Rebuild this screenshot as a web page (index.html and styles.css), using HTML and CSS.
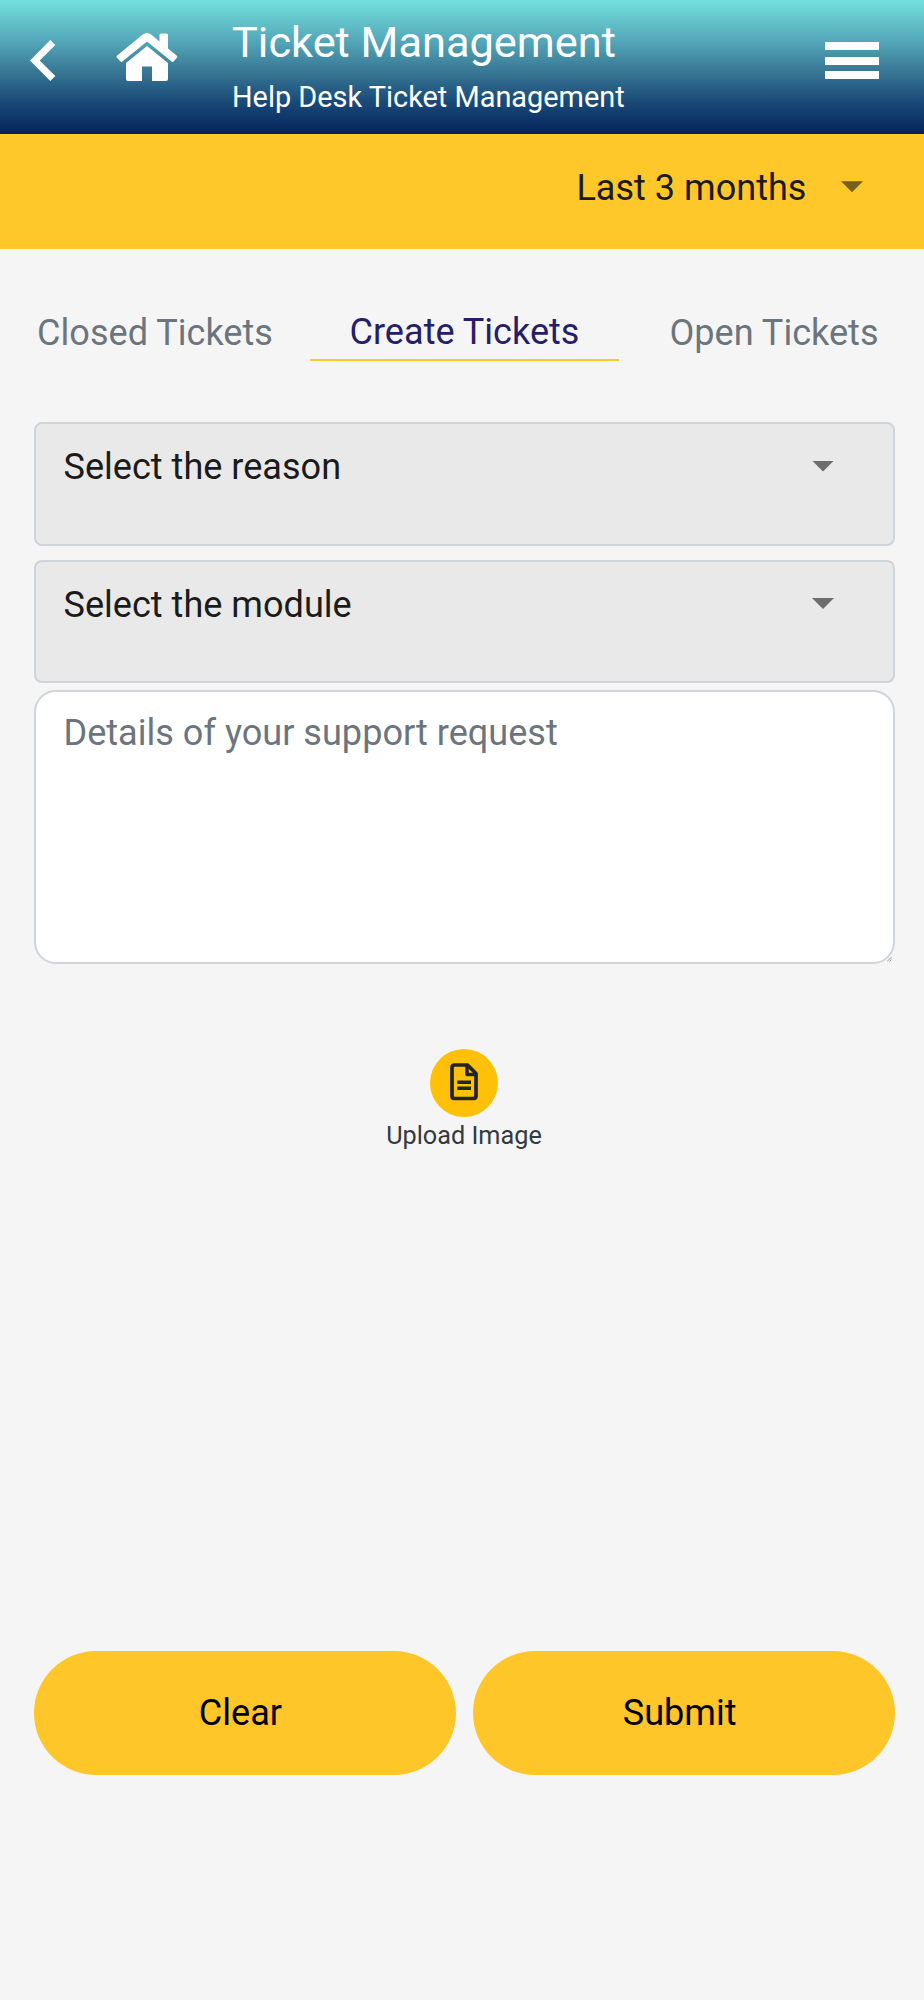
FILE: index.html
```html
<!DOCTYPE html>
<html lang="en">
<head>
<meta charset="utf-8">
<title>Ticket Management</title>
<link rel="stylesheet" href="styles.css">
</head>
<body>
<header class="header">
  <svg class="back" viewBox="0 0 26 42"><path d="M20.3 0 25.3 5 9.7 20.5 25.3 36 20.3 41 0 20.5Z"/></svg>
  <svg class="home" viewBox="0 0 62 48"><path d="M31 13 52 30V46Q52 48 50 48H36V33.5H26V48H12Q10 48 10 46V30Z"/><path d="M26.5 1.7Q31 -1.7 35.5 1.7L43.5 8.4V2Q43.5 .5 45 .5H50.5Q52 .5 52 2V15.5L60.6 22.6Q61.8 23.6 60.8 24.8L57.8 28.3Q56.8 29.4 55.6 28.4L31 8.5 6.4 28.4Q5.2 29.4 4.2 28.3L1 24.8Q0 23.6 1.2 22.6Z"/></svg>
  <div class="heading">
    <h1 class="title">Ticket Management</h1>
    <p class="subtitle">Help Desk Ticket Management</p>
  </div>
  <div class="menu"><span class="bar"></span><span class="bar"></span><span class="bar"></span></div>
</header>
<div class="filter"><span>Last 3 months</span><i class="caret"></i></div>
<nav class="tabs">
  <a class="tab">Closed Tickets</a>
  <a class="tab tab-active">Create Tickets</a>
  <a class="tab tab-last">Open Tickets</a>
</nav>
<main class="form">
  <div class="select"><span>Select the reason</span><i class="caret"></i></div>
  <div class="select"><span>Select the module</span><i class="caret"></i></div>
  <div class="details">Details of your support request
    <svg class="grip" viewBox="0 0 6 6"><path d="M0 5.5 5.5 0M3 5.5 5.5 3"/></svg>
  </div>
  <div class="upload">
    <div class="circle">
      <svg class="doc" viewBox="0 0 28 38"><path class="page" d="M5 2H17.5L26 10.5V33Q26 35.5 23.5 35.5H4.5Q2 35.5 2 33V4.5Q2 2 4.5 2Z"/><path class="line" d="M17 2V11.5H26M7.3 19.3H21M7.3 25.3H21"/></svg>
    </div>
    <span class="upload-label">Upload Image</span>
  </div>
  <div class="actions"><button class="button">Clear</button><button class="button">Submit</button></div>
</main>
</body>
</html>
```
FILE: styles.css
```css
* { box-sizing: border-box; }
body { margin: 0; width: 924px; height: 2000px; background: #f5f5f5; font: 36.1px/44px Roboto, sans-serif; color: #1b1b1b; }
.header { display: flex; height: 134px; padding-left: 30px; background: linear-gradient(#74e1df 0%, #54a8b9 30%, #387895 53%, #1a4a78 76%, #04235c 100%); color: #fff; }
.back { width: 26px; height: 42px; margin-top: 40px; fill: #fff; }
.home { width: 62px; height: 48px; margin: 32.5px 0 0 59.5px; fill: #fff; }
.heading { margin: 17px 0 0 54.5px; width: 420px; white-space: nowrap; }
.title { margin: 0; font-size: 43.35px; line-height: 52px; font-weight: 400; }
.subtitle { margin: 10px 0 0; font-size: 28.9px; line-height: 36px; }
.menu { display: flex; flex-direction: column; gap: 6.7px; width: 53.5px; margin: 42px 0 0 173px; }
.bar { height: 8px; background: #fff; }
.filter { display: flex; justify-content: flex-end; align-items: flex-start; height: 115px; padding: 32px 61px 0 0; background: #ffc82a; white-space: nowrap; }
.caret { width: 22px; height: 11px; background: currentColor; opacity: .6; clip-path: polygon(0 0, 100% 0, 50% 100%); }
.filter .caret { margin: 15.3px 0 0 34.5px; }
.tabs { display: grid; grid-template-columns: 310px 309px 305px; margin-top: 58px; height: 54px; color: #6c757d; text-align: center; white-space: nowrap; }
.tab { padding-top: 4px; }
.tab-active { padding-top: 3px; color: #261e69; border-bottom: 2px solid #ffc82a; }
.tab-last { padding-left: 5px; }
.form { margin: 61px 29px 0 34px; }
.select { display: flex; justify-content: space-between; height: 123.5px; margin-bottom: 14px; padding: 21px 59px 0 27.5px; border: 2px solid #ced4da; border-radius: 8px; background: #e9e9e9; }
.select .caret { margin-top: 15.5px; }
.details { position: relative; height: 274px; margin-top: -7px; padding: 19px 27.5px; border: 2px solid #ced4da; border-radius: 22px; background: #fff; color: #6c757d; }
.grip { position: absolute; right: 1px; bottom: 0; width: 5px; height: 5px; fill: none; stroke: #888; stroke-width: 1; }
.upload { display: flex; flex-direction: column; align-items: center; margin-top: 85px; padding-right: 1px; }
.circle { display: flex; justify-content: center; width: 68px; height: 68px; padding-top: 13.5px; border-radius: 50%; background: #ffc107; }
.doc { width: 28px; height: 38px; fill: none; stroke: #212529; stroke-width: 3.7; stroke-linejoin: round; }
.line { stroke-width: 3.5; }
.upload-label { margin-top: 4px; font-size: 25.25px; line-height: 30px; color: #343a40; }
.actions { display: flex; gap: 17.5px; margin-top: 500px; }
.button { flex: 1; height: 123.5px; padding: 0 9px 0 0; border: 0; border-radius: 62px; background: #ffc629; color: #000; font: inherit; }
```
